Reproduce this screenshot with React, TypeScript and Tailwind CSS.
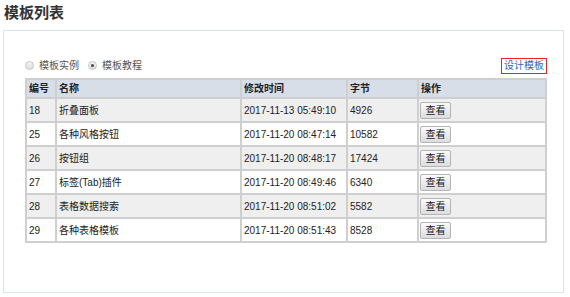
import React from 'react'

const rows = [
  { id: 18, name: '折叠面板', time: '2017-11-13 05:49:10', size: 4926 },
  { id: 25, name: '各种风格按钮', time: '2017-11-20 08:47:14', size: 10582 },
  { id: 26, name: '按钮组', time: '2017-11-20 08:48:17', size: 17424 },
  { id: 27, name: '标签(Tab)插件', time: '2017-11-20 08:49:46', size: 6340 },
  { id: 28, name: '表格数据搜索', time: '2017-11-20 08:51:02', size: 5582 },
  { id: 29, name: '各种表格模板', time: '2017-11-20 08:51:43', size: 8528 },
]

function Radio({ checked }: { checked?: boolean }) {
  return (
    <span className="flex h-[9px] w-[9px] items-center justify-center rounded-full border border-[#c4c4c4] bg-gradient-to-b from-[#f4f4f4] to-[#dedede]">
      {checked && <span className="h-[3px] w-[3px] rounded-full bg-[#444]" />}
    </span>
  )
}

export default function App() {
  return (
    <div className="h-[297px] w-[570px] bg-white text-[10px] text-[#222] [font-family:'Liberation_Sans','Noto_Sans_CJK_SC',sans-serif]">
      {/* title */}
      <div className="h-[30px] pl-[4px] pt-[3px] text-[15px] font-bold leading-[20px] text-[#333]">模板列表</div>

      {/* panel */}
      <div className="ml-[3px] h-[263px] w-[561px] border border-[#d5e5f2] pl-[21px] pt-[26px]">
        <div className="flex h-[17px] w-[522px] items-center justify-between">
          <div className="flex items-center text-[#555]">
            <Radio />
            <span className="ml-[5px]">模板实例</span>
            <span className="ml-[9px]"><Radio checked /></span>
            <span className="ml-[5px]">模板教程</span>
          </div>
          <a className="border border-[#ee2222] px-[2px] leading-[14px] text-[#3366bb]">设计模板</a>
        </div>

        <table className="mt-[4px] w-[520px] table-fixed border-collapse">
          <colgroup>
            <col className="w-[30px]" />
            <col className="w-[185px]" />
            <col className="w-[106px]" />
            <col className="w-[71px]" />
            <col className="w-[128px]" />
          </colgroup>
          <thead>
            <tr className="h-[19px] bg-[#d8dee8] text-left font-bold">
              {['编号', '名称', '修改时间', '字节', '操作'].map((h) => (
                <th key={h} className="border-2 border-[#cfcfcf] px-[2px] font-bold">{h}</th>
              ))}
            </tr>
          </thead>
          <tbody>
            {rows.map((r, i) => (
              <tr key={r.id} className={`h-[24px] align-top ${i % 2 === 0 ? 'bg-[#efefef]' : 'bg-white'}`}>
                <td className="border-2 border-[#cfcfcf] px-[2px] pt-[4px]">{r.id}</td>
                <td className="border-2 border-[#cfcfcf] px-[2px] pt-[4px]">{r.name}</td>
                <td className="border-2 border-[#cfcfcf] px-[2px] pt-[4px]">{r.time}</td>
                <td className="border-2 border-[#cfcfcf] px-[2px] pt-[4px]">{r.size}</td>
                <td className="border-2 border-[#cfcfcf] px-[1px] pt-[3px]">
                  <button className="h-[17px] w-[31px] rounded-[2px] border border-[#b5b5b5] bg-gradient-to-b from-[#fafafa] to-[#dddddd] text-[10px] leading-[15px] text-[#222]">
                    查看
                  </button>
                </td>
              </tr>
            ))}
          </tbody>
        </table>
      </div>
    </div>
  )
}
